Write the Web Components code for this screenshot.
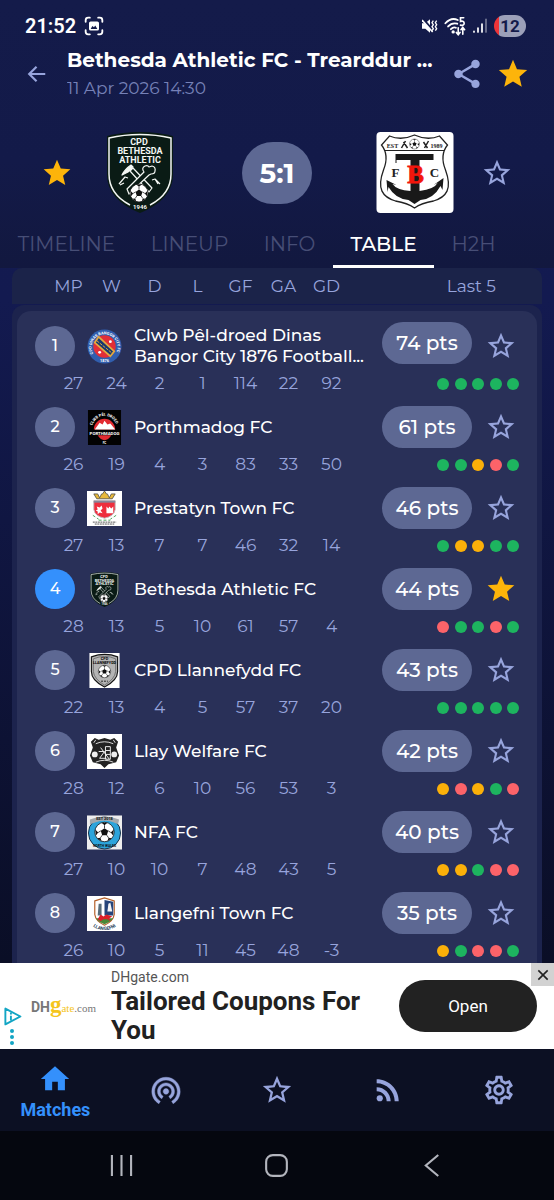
<!DOCTYPE html>
<html lang="en">
<head>
<meta charset="utf-8">
<meta name="viewport" content="width=device-width, initial-scale=1">
<title>Bethesda Athletic FC - Match</title>
<style>
  :root {
    --font-sans: Montserrat, Inter, "Open Sans", sans-serif;
    --font-ui: Roboto, "Noto Sans", sans-serif;
    --text: #fff;
    --muted: #97a4dc;
    --pill: #5d6893;
    --gold: #fdb40a;
    --blue: #3490fc;
    --win: #1db45f;
    --draw: #fbb009;
    --loss: #fc6369;
  }

  html, body {
    height: 100%;
  }

  body {
    margin: 0;
    background: #05070f;
    color: var(--text);
    font-family: var(--font-sans);
  }
</style>
</head>
<body>
<match-app></match-app>

<script>
const ICONS = {
  star: `<path d="M12 17.27 18.18 21l-1.64-7.03L22 9.24l-7.19-.61L12 2 9.19 8.63 2 9.24l5.46 4.73L5.82 21z"/>`,
  "star-outline": `<path d="M22 9.24l-7.19-.62L12 2 9.19 8.63 2 9.24l5.46 4.73L5.82 21 12 17.27 18.18 21l-1.63-7.03L22 9.24zM12 15.4l-3.76 2.27 1-4.28-3.32-2.88 4.38-.38L12 6.1l1.71 4.04 4.38.38-3.32 2.88 1 4.28L12 15.4z"/>`,
  back: `<path d="M21 12H4M11.5 4 3.5 12l8 8" fill="none" stroke="currentColor" stroke-width="2.4"/>`,
  share: `<path d="M18 16.08c-.76 0-1.44.3-1.96.77L8.91 12.7c.05-.23.09-.46.09-.7s-.04-.47-.09-.7l7.05-4.11c.54.5 1.25.81 2.04.81 1.66 0 3-1.34 3-3s-1.34-3-3-3-3 1.34-3 3c0 .24.04.47.09.7L8.04 9.81C7.5 9.31 6.79 9 6 9c-1.66 0-3 1.34-3 3s1.34 3 3 3c.79 0 1.5-.31 2.04-.81l7.12 4.16c-.05.21-.08.43-.08.65 0 1.61 1.31 2.92 2.92 2.92s2.92-1.31 2.92-2.92-1.31-2.92-2.92-2.92z"/>`,
  home: `<path d="M10 20v-6h4v6h5v-8h3L12 3 2 12h3v8z"/>`,
  live: `<path d="M12 11c-1.1 0-2 .9-2 2s.9 2 2 2 2-.9 2-2-.9-2-2-2zm6 2c0-3.31-2.69-6-6-6s-6 2.69-6 6c0 2.22 1.21 4.15 3 5.19l1-1.74c-1.19-.7-2-1.97-2-3.45 0-2.21 1.79-4 4-4s4 1.79 4 4c0 1.48-.81 2.75-2 3.45l1 1.74c1.79-1.04 3-2.97 3-5.19zM12 3C6.48 3 2 7.48 2 13c0 3.7 2.01 6.92 4.99 8.65l1-1.73C5.61 18.53 4 15.96 4 13c0-4.42 3.58-8 8-8s8 3.58 8 8c0 2.96-1.61 5.53-4 6.92l1 1.73c2.99-1.73 5-4.95 5-8.65 0-5.52-4.48-10-10-10z" stroke="currentColor" stroke-width=".3"/>`,
  feed: `<circle cx="6.18" cy="17.82" r="2.18"/><path d="M4 4.44v2.83c7.03 0 12.73 5.7 12.73 12.73h2.83c0-8.59-6.97-15.56-15.56-15.56zm0 5.66v2.83c3.9 0 7.07 3.17 7.07 7.07h2.83c0-5.47-4.43-9.9-9.9-9.9z"/>`,
  settings: `<path d="M19.43 12.98c.04-.32.07-.64.07-.98 0-.34-.03-.66-.07-.98l2.11-1.65c.19-.15.24-.42.12-.64l-2-3.46c-.09-.16-.26-.25-.44-.25-.06 0-.12.01-.17.03l-2.49 1c-.52-.4-1.08-.73-1.69-.98l-.38-2.65C14.46 2.18 14.25 2 14 2h-4c-.25 0-.46.18-.49.42l-.38 2.65c-.61.25-1.17.59-1.69.98l-2.49-1c-.06-.02-.12-.03-.18-.03-.17 0-.34.09-.43.25l-2 3.46c-.13.22-.07.49.12.64l2.11 1.65c-.04.32-.07.65-.07.98 0 .33.03.66.07.98l-2.11 1.65c-.19.15-.24.42-.12.64l2 3.46c.09.16.26.25.44.25.06 0 .12-.01.17-.03l2.49-1c.52.4 1.08.73 1.69.98l.38 2.65c.03.24.24.42.49.42h4c.25 0 .46-.18.49-.42l.38-2.65c.61-.25 1.17-.59 1.69-.98l2.49 1c.06.02.12.03.18.03.17 0 .34-.09.43-.25l2-3.46c.12-.22.07-.49-.12-.64l-2.11-1.65zm-1.98-1.71c.04.31.05.52.05.73 0 .21-.02.43-.05.73l-.14 1.13.89.7 1.08.84-.7 1.21-1.27-.51-1.04-.42-.9.68c-.43.32-.84.56-1.25.73l-1.06.43-.16 1.13-.2 1.35h-1.4l-.19-1.35-.16-1.13-1.06-.43c-.43-.18-.83-.41-1.23-.71l-.91-.7-1.06.43-1.27.51-.7-1.21 1.08-.84.89-.7-.14-1.13c-.03-.31-.05-.54-.05-.74s.02-.43.05-.73l.14-1.13-.89-.7-1.08-.84.7-1.21 1.27.51 1.04.42.9-.68c.43-.32.84-.56 1.25-.73l1.06-.43.16-1.13.2-1.35h1.39l.19 1.35.16 1.13 1.06.43c.43.18.83.41 1.23.71l.91.7 1.06-.43 1.27-.51.7 1.21-1.07.85-.89.7.14 1.13zM12 8c-2.21 0-4 1.79-4 4s1.79 4 4 4 4-1.79 4-4-1.79-4-4-4zm0 6c-1.1 0-2-.9-2-2s.9-2 2-2 2 .9 2 2-.9 2-2 2z"/>`,
  capture: `<g fill="none" stroke="currentColor" stroke-width="2.2" stroke-linecap="round"><path d="M2 7V5q0-3 3-3h2M17 2h2q3 0 3 3v2M22 17v2q0 3-3 3h-2M7 22H5q-3 0-3-3v-2"/></g><path fill-rule="evenodd" d="M8 6.5h8q2 0 2 2v7q0 2-2 2H8q-2 0-2-2v-7q0-2 2-2zM8 15.5h8l-2.5-4-1.5 2-2-1.5z"/>`,
  mute: `<path d="M0 8h5l7-6v20l-7-6H0z"/><path d="M1 1 17 20" stroke="#141b4a" stroke-width="4"/><path d="M0 3 16 21" fill="none" stroke="currentColor" stroke-width="2.4"/><path d="M17 4l-2 3 2 3-2 3 2 3-2 3M22 4l-2 3 2 3-2 3 2 3-2 3" fill="none" stroke="currentColor" stroke-width="2"/>`,
  wifi: `<g fill="none" stroke="currentColor" stroke-width="2" stroke-linecap="round"><path d="M1.5 9Q8 2 15 5.5M4.5 12.5q4-4.5 10-3M7.5 15.5q3-3 5.5-1.5"/><path d="M21.5 3H18v4q4-1 4 2t-4 2" stroke-width="1.8"/><path d="M15.5 14v7m-2-2 2 2.5 2-2.5M20.5 21v-7m-2 2 2-2.5 2 2.5" stroke-width="1.8"/></g><circle cx="10" cy="18.5" r="1.8"/>`,
  signal: `<g stroke="currentColor" stroke-width="2.6" stroke-linecap="round"><path d="M3 21v-1M9 21v-6M15 21V9"/><path d="M21 21V2" opacity=".4"/></g>`,
  close: `<path d="M5 5 19 19M19 5 5 19" fill="none" stroke="currentColor" stroke-width="2.4"/>`,
  adchoices: `<path d="M3 2v20l19-10z" fill="none" stroke="currentColor" stroke-width="2.4" stroke-linejoin="round"/><path d="M10 11v6M10 7v2.5" stroke="currentColor" stroke-width="2.4"/>`,
  dots: `<circle cx="12" cy="3" r="3"/><circle cx="12" cy="12" r="3"/><circle cx="12" cy="21" r="3"/>`,
  recents: `<path d="M2 1v22M12 1v22M22 1v22" stroke="currentColor" stroke-width="2.2"/>`,
  "system-home": `<rect x="1.2" y="1.2" width="21.6" height="21.6" rx="7" fill="none" stroke="currentColor" stroke-width="2.2"/>`,
  "system-back": `<path d="M18 1 5 12l13 11" fill="none" stroke="currentColor" stroke-width="2.2"/>`
};

const FOOTBALL = /* svg */`
  <circle r="10" fill="#fff" stroke="#111" stroke-width=".8"/>
  <path d="M0-4 3.8-1.2 2.4 3.3H-2.4L-3.8-1.2zM-3-9.5H3L0-7zM9.5-2.5 8.8 3.5 6.5.5zM-9.5-2.5-8.8 3.5-6.5.5zM3 9.5 7.5 6.5 4.2 6zM-3 9.5-7.5 6.5-4.2 6z" fill="#111"/>
  <path d="M0-4V-7M3.8-1.2 6.5 .5M2.4 3.3 4.2 6M-2.4 3.3-4.2 6M-3.8-1.2-6.5 .5" stroke="#111" stroke-width=".8"/>`;

const CRESTS = {
  bethesda: {
    box: "0 0 68 81",
    art: /* svg */`
      <path d="M1 4Q17 0 34 0T67 4V44Q66 68 34 81 2 68 1 44z" fill="#0a1b15"/>
      <path d="M24 73Q3 62 3 42V6Q18 2.5 34 2.5T65 6V42Q65 62 44 73" fill="none" stroke="#f4f7f4" stroke-width="1.5"/>
      <g fill="#f4f7f4" font-family="Roboto, sans-serif" font-weight="700" text-anchor="middle">
        <text x="33" y="13" font-size="9">CPD</text>
        <text x="34" y="22" font-size="9">BETHESDA</text>
        <text x="34" y="31" font-size="9">ATHLETIC</text>
        <text x="34" y="77" font-size="6">1946</text>
      </g>
      <g fill="none" stroke="#f4f7f4" stroke-width="1.2" stroke-linejoin="round">
        <path d="M16 43q3-6 9-10l2 2-5 5z" fill="#f4f7f4"/>
        <path d="M24 39 27 36 46 56 43 60z"/>
        <path d="M21 57 38 40q-3-4 1-6 3-1 4 1l3-1q4 1 3 5 0 3-4 3l-2 1-20 19z" fill="#0a1b15"/>
        <path d="M13 52l6-7 3 1M14 53l4-2M46 48l3-1 5 5M49 47l3 5"/>
      </g>
      <g transform="translate(33 61) scale(.9)">${FOOTBALL}</g>`
  },
  trearddur: {
    box: "0 0 77 81",
    art: /* svg */`
      <rect width="77" height="81" rx="4" fill="#fff"/>
      <path d="M13 4Q25 9 38 3 51 9 63 4L71 13Q63 23 69 38C76 57 70 65 57 69Q45 71 38 76 31 71 19 69C6 65 0 57 7 38Q13 23 5 13z" fill="none" stroke="#222" stroke-width="1.3"/>
      <path d="M8 18.5H68" stroke="#222" stroke-width="1"/>
      <g font-family="Liberation Serif, serif" font-weight="700" fill="#222" text-anchor="middle">
        <text x="16" y="16" font-size="6">EST</text>
        <text x="60" y="16" font-size="6">1989</text>
        <text x="19" y="45" font-size="13">F</text>
        <text x="58" y="45" font-size="13">C</text>
      </g>
      <g transform="translate(38 12) scale(.5)">${FOOTBALL}</g>
      <path d="M25 16l4-7M27 10l4 6M47 10l4 6M52 9l-4 7" stroke="#222" stroke-width="1.5"/>
      <path d="M19 22H57V28H43V59Q58 57 61 51L57 53 67 46 66 58 64 54Q57 67 44 68L38 72 32 68Q19 67 12 55L11 60 10 48 20 53 16 52Q20 58 34 59V28H20V31H19z" fill="#191919"/>
      <text x="39" y="51" text-anchor="middle" font-family="Liberation Serif, serif" font-weight="700" font-size="25" fill="#f3160c" stroke="#f3160c" stroke-width=".8">B</text>`
  },
  bangor: {
    box: "0 0 36 36",
    art: /* svg */`
      <circle cx="18" cy="18" r="17.5" fill="#315eae"/><circle cx="18" cy="18" r="11.5" fill="#e22e37"/>
      <path d="M8 14 24 28 28 23 12 8z" fill="#17396f" stroke="#e2a93f" stroke-width="1.8"/>
      <path d="M10 12 26 25" stroke="#e2a93f" stroke-dasharray="3 1"/><circle cx="24" cy="13" r="1.5" fill="#fff"/><circle cx="13" cy="24" r="1.5" fill="#fff"/>
      <path id="ring" d="M7.5 27a13.3 13.3 0 1 1 21 0" fill="none"/>
      <text font-family="Roboto, sans-serif" font-size="4" font-weight="700" fill="#fff"><textPath href="#ring" startOffset="2">CPD DINAS BANGOR CITY FC</textPath></text>
      <text x="18" y="34" text-anchor="middle" font-family="Roboto, sans-serif" font-size="4" font-weight="700" fill="#fff">1876</text>`
  },
  porthmadog: {
    box: "0 0 34 36",
    art: /* svg */`
      <rect width="34" height="36" fill="#020202"/>
      <path d="M6 20a11 11 0 0 1 22 0z" fill="#e32b31"/><path d="M7 20l5-7 3 2 2-4 3 4 3-1 5 6z" fill="#fff"/>
      <path d="M10 26h14q-3 5-7 5t-7-5" fill="#e32b31"/>
      <path id="ring" d="M4 20a13 14 0 0 1 26 0" fill="none"/>
      <g font-family="Roboto, sans-serif" font-weight="700" fill="#fff">
        <text font-size="4"><textPath href="#ring" startOffset="4">CLWB PÊL DROED</textPath></text>
        <text x="17" y="26" text-anchor="middle" font-size="4.5">PORTHMADOG</text>
        <text x="17" y="35" text-anchor="middle" font-size="3">FC</text>
      </g>`
  },
  prestatyn: {
    box: "0 0 36 36",
    art: /* svg */`
      <rect width="36" height="36" fill="#fff"/>
      <path d="M7 3h4l2 4 2-4h1l2-3 2 3h1l2 4 2-4h4l-3 5H10z" fill="#e8b93b" stroke="#4b4942" stroke-width=".8"/>
      <path d="M7 10H29V19Q28 26 18 28 8 26 7 19z" fill="#ee2d3d" stroke="#c3bec0"/><path d="M7 10h22v2H7z" fill="#85869a"/>
      <path d="M10 16l3 1 2-2 1 3-2 2 2 3-3-1-2 2v-3l-2-1 2-1zM20 23v-7l2 2 1-2 2 2 2-2v7z" fill="#fff"/>
      <path d="M6 25l6 4M30 25l-6 4M12 30h12" stroke="#4aa45a" stroke-dasharray="3 2"/><path d="M6 32h24M8 34h20" stroke="#555" stroke-dasharray="2 .6"/>`
  },
  llannefydd: {
    box: "0 0 31 36",
    art: /* svg */`
      <rect width="31" height="36" fill="#fff"/>
      <path d="M2 4Q16-1 29 4V19Q29 28 15.5 35 2 28 2 19z" fill="#b4b4b4" stroke="#151515" stroke-width="1.2"/>
      <path d="M4 6Q16 1 27 6V19Q26 27 15.5 33 5 27 4 19z" fill="none" stroke="#555" stroke-width=".7"/>
      <g font-family="Roboto, sans-serif" font-weight="700" text-anchor="middle"><text x="15.5" y="7" font-size="4">CPD</text><text x="15.5" y="11" font-size="3.8">LLANNEFYDD</text></g>
      <g transform="translate(15.5 19) scale(.64)">${FOOTBALL}</g><path d="M12 29h7" stroke="#222" stroke-dasharray="2 1"/>`
  },
  llay: {
    box: "0 0 36 36",
    art: /* svg */`
      <rect width="36" height="36" fill="#fff"/>
      <path d="M8 4 12 6 18 4 24 6 28 4 32 8 30 14Q31 17 33 22L30 29 22 31 18 35 14 31 6 29 3 22Q5 17 6 14L4 8z" fill="#222"/>
      <path d="M9 10q9-4 18 0M9 29q9-4 18 0M9 6 7 9M27 6l2 3" fill="none" stroke="#ddd"/><circle cx="8" cy="21" r="3" fill="#eee"/><circle cx="28" cy="21" r="3" fill="#eee"/>
      <path d="M12 18h6l-5 7h7M19 13h5v13h-5zM19 17h5M19 21h5M14 14l9 12" fill="none" stroke="#eee"/>`
  },
  nfa: {
    box: "0 0 36 35",
    art: /* svg */`
      <rect width="36" height="35" fill="#eee"/><circle cx="18" cy="18" r="16.5" fill="#2ca4db" stroke="#173047"/>
      <path d="M3 4q15-6 30 0l-1 5-5-2q-9-3-18 0l-6 2z" fill="#a3a8ac"/>
      <g transform="translate(18 17)">${FOOTBALL}</g>
      <g font-family="Roboto, sans-serif" font-weight="700" fill="#111" text-anchor="middle"><text x="18" y="5" font-size="4">EST 2018</text><text x="18" y="32" font-size="3.5">NORTH WALES</text></g>`
  },
  llangefni: {
    box: "0 0 36 36",
    art: /* svg */`
      <rect width="36" height="36" fill="#fff"/>
      <path d="M8 5 18 2l10 3v14q-1 7-10 11-9-4-10-11z" fill="#fff" stroke="#b45e27" stroke-width="1.2"/>
      <path d="M18 4l9 2v14h-9z" fill="#26447a"/><path d="M21 16l1-8 2-1 2 9z" fill="#f5f5f5"/><path d="M12 8h3v12h-4z" fill="#586c79"/>
      <path d="M9 23h18q-3 4-9 6-6-2-9-6" fill="#4a8736"/><path d="M11 24l3-5 3 2 3-2 6 2-3 2 1 3-3-2h-4l-3 2z" fill="#db2028"/>
      <path id="ring" d="M2 25q4 10 16 10t16-10" fill="none"/>
      <text font-family="Roboto, sans-serif" font-weight="700" font-size="4.8" fill="#273d5b" text-anchor="middle"><textPath href="#ring" startOffset="50%">LLANGEFNI</textPath></text>`
  }
};

const TEAMS = [
  { name: "Clwb Pêl-droed Dinas<br>Bangor City 1876 Football...", crest: "bangor", pts: 74, stats: [27, 24, 2, 1, 114, 22, 92], form: "WWWWW", tall: true },
  { name: "Porthmadog FC", crest: "porthmadog", pts: 61, stats: [26, 19, 4, 3, 83, 33, 50], form: "WWDLW" },
  { name: "Prestatyn Town FC", crest: "prestatyn", pts: 46, stats: [27, 13, 7, 7, 46, 32, 14], form: "WDDWW" },
  { name: "Bethesda Athletic FC", crest: "bethesda", pts: 44, stats: [28, 13, 5, 10, 61, 57, 4], form: "LWWLW", current: true },
  { name: "CPD Llannefydd FC", crest: "llannefydd", pts: 43, stats: [22, 13, 4, 5, 57, 37, 20], form: "WWWWW" },
  { name: "Llay Welfare FC", crest: "llay", pts: 42, stats: [28, 12, 6, 10, 56, 53, 3], form: "DLDWL" },
  { name: "NFA FC", crest: "nfa", pts: 40, stats: [27, 10, 10, 7, 48, 43, 5], form: "DDWLL" },
  { name: "Llangefni Town FC", crest: "llangefni", pts: 35, stats: [26, 10, 5, 11, 45, 48, -3], form: "DWLLW" }
];

const BUTTON_RESET = /* css */`
  button {
    margin: 0;
    padding: 0;
    border: 0;
    background: none;
    color: inherit;
    font: inherit;
    cursor: pointer;
  }
`;

class BaseElement extends HTMLElement {
  constructor() {
    super();
    this.attachShadow({ mode: "open" });
  }

  connectedCallback() {
    this.shadowRoot.innerHTML = `<style>${this.constructor.styles}</style>${this.template()}`;
  }
}

class UiIcon extends BaseElement {
  static get styles() {
    return /* css */`
      :host { display: inline-block; width: var(--icon-size, 32px); height: var(--icon-size, 32px); flex: none; }
      svg { display: block; width: 100%; height: 100%; fill: currentColor; }
    `;
  }

  template() {
    return `<svg viewBox="0 0 24 24" aria-hidden="true">${ICONS[this.getAttribute("name")]}</svg>`;
  }
}

class ClubCrest extends BaseElement {
  static get styles() {
    return /* css */`
      :host { display: block; height: var(--crest-size, 35px); }
      svg { display: block; width: 100%; height: 100%; }
    `;
  }

  template() {
    const { box, art } = CRESTS[this.getAttribute("club")];
    return `<svg viewBox="${box}" aria-hidden="true">${art}</svg>`;
  }
}

class FavoriteButton extends BaseElement {
  static get styles() {
    return /* css */`
      ${BUTTON_RESET}
      :host { display: flex; color: var(--muted); }
      :host([active]) { color: var(--gold); }
      button { display: flex; }
    `;
  }

  template() {
    const active = this.hasAttribute("active");
    return `<button type="button" aria-label="Favourite" aria-pressed="${active}">
      <ui-icon name="${active ? "star" : "star-outline"}"></ui-icon>
    </button>`;
  }
}

class StatusBar extends BaseElement {
  static get styles() {
    return /* css */`
      :host {
        display: flex;
        align-items: center;
        gap: 6px;
        height: 36px;
        padding: 8px 28px 0 25px;
        font-family: var(--font-ui);
        font-size: 20px;
        font-weight: 600;
        --icon-size: 20px;
      }
      time { margin-right: 2px; }
      .right { display: flex; align-items: center; gap: 6px; margin-left: auto; --icon-size: 16px; }
      .right ui-icon[name="wifi"] { --icon-size: 22px; }
      .battery {
        width: 32px;
        border-radius: 11px;
        background: linear-gradient(90deg, #ee3438 5px, #9ca0b9 5px);
        color: #141b4a;
        font-size: 17px;
        font-weight: 700;
        line-height: 22px;
        text-align: center;
      }
    `;
  }

  template() {
    return /* html */`
      <time>21:52</time>
      <ui-icon name="capture"></ui-icon>
      <div class="right">
        <ui-icon name="mute"></ui-icon>
        <ui-icon name="wifi"></ui-icon>
        <ui-icon name="signal"></ui-icon>
        <span class="battery">12</span>
      </div>`;
  }
}

class MatchHeader extends BaseElement {
  static get styles() {
    return /* css */`
      ${BUTTON_RESET}
      :host { display: flex; align-items: center; height: 60px; padding: 0 24px 0 26px; color: var(--muted); }
      button { display: flex; }
      .back { --icon-size: 22px; }
      .title { flex: 1; min-width: 0; padding-left: 19px; }
      h1 { margin: 0; color: var(--text); font-size: 20px; font-weight: 700; line-height: 28px; white-space: nowrap; }
      p { margin: 0; font-size: 17px; line-height: 28px; opacity: .75; }
      .actions { display: flex; gap: 12px; --icon-size: 34px; }
    `;
  }

  template() {
    return /* html */`
      <button class="back" type="button" aria-label="Back"><ui-icon name="back"></ui-icon></button>
      <div class="title">
        <h1><slot></slot></h1>
        <p><slot name="date"></slot></p>
      </div>
      <div class="actions">
        <button type="button" aria-label="Share"><ui-icon name="share"></ui-icon></button>
        <favorite-button active></favorite-button>
      </div>`;
  }
}

class MatchScore extends BaseElement {
  static get styles() {
    return /* css */`
      :host {
        display: grid;
        grid-template-columns: 82fr 83fr 192fr 83fr 82fr;
        align-items: center;
        justify-items: center;
        height: 81px;
        padding: 28px 16px 9px;
        --crest-size: 81px;
      }
      club-crest { width: 78px; }
      .score {
        width: 70px;
        border-radius: 31px;
        background: var(--pill);
        font-size: 28px;
        font-weight: 700;
        line-height: 62px;
        text-align: center;
      }
    `;
  }

  template() {
    return /* html */`
      <favorite-button active></favorite-button>
      <club-crest club="bethesda"></club-crest>
      <div class="score"><slot></slot></div>
      <club-crest club="trearddur"></club-crest>
      <favorite-button></favorite-button>`;
  }
}

class MatchTabs extends BaseElement {
  static get styles() {
    return /* css */`
      ${BUTTON_RESET}
      :host {
        display: grid;
        grid-template-columns: 133fr 113fr 87fr 101fr 79fr 41fr;
        height: 46px;
        color: #474e76;
        font-size: 20px;
      }
      button { border-bottom: 3px solid transparent; }
      button[aria-selected="true"] { border-color: #fff; color: #fff; font-weight: 500; }
    `;
  }

  template() {
    return ["TIMELINE", "LINEUP", "INFO", "TABLE", "H2H"]
      .map((tab) => `<button type="button" role="tab" aria-selected="${tab === "TABLE"}">${tab}</button>`)
      .join("");
  }
}

class FormDots extends BaseElement {
  static get styles() {
    return /* css */`
      :host { display: flex; justify-content: space-between; width: 82px; }
      i { width: 12px; height: 12px; border-radius: 50%; background: var(--win); }
      .D { background: var(--draw); }
      .L { background: var(--loss); }
    `;
  }

  template() {
    return [...this.getAttribute("results")].map((r) => `<i class="${r}"></i>`).join("");
  }
}

class LeagueTable extends BaseElement {
  static get styles() {
    return /* css */`
      :host { display: block; padding: 0 12px; }
      table, thead, tbody { display: block; }
      tr { display: flex; align-items: center; }
      th, td { padding: 0; font-weight: 400; }
      thead {
        margin-bottom: 1px;
        border-radius: 10px 10px 0 0;
        background: #1b2349;
      }
      thead tr { height: 36px; padding: 0 23px 0 35px; }
      .panel {
        padding: 6px 5px;
        border-radius: 12px 12px 0 0;
        background: #1c234d;
      }
      .head, .stats { color: var(--muted); font-size: 17px; line-height: 27px; }
      .head th, .stats td { width: 43px; text-align: center; white-space: nowrap; }
      .head .last, .stats .last { flex: 1; }
      .head .last { padding-right: 23px; text-align: right; }
      .stats .last { display: flex; justify-content: flex-end; }
      .card { padding-top: 11px; border-radius: 14px 14px 0 0; background: #293058; }
      .team { height: 48px; padding: 0 20px 0 18px; }
      .rank {
        width: 40px;
        border-radius: 50%;
        background: var(--pill);
        font-size: 16px;
        font-weight: 500;
        line-height: 40px;
        text-align: center;
      }
      .current .rank { background: var(--blue); }
      .crest { width: 35px; margin: 0 12px; }
      .name { flex: 1; font-size: 17px; font-weight: 500; line-height: 21px; text-align: left; white-space: nowrap; }
      .points {
        width: 90px;
        margin-right: 13px;
        border-radius: 21px;
        background: var(--pill);
        font-size: 20px;
        font-weight: 500;
        line-height: 42px;
        text-align: center;
      }
      .tall .points { align-self: flex-start; }
      .stats { padding: 0 18px 6px 35px; }
    `;
  }

  team(team, index) {
    return /* html */`
      <tbody class="${team.current ? "current" : ""} ${team.tall ? "tall" : ""}">
        <tr class="team">
          <td class="rank">${index + 1}</td>
          <td class="crest"><club-crest club="${team.crest}"></club-crest></td>
          <th class="name" scope="rowgroup">${team.name}</th>
          <td class="points">${team.pts} pts</td>
          <td><favorite-button ${team.current ? "active" : ""}></favorite-button></td>
        </tr>
        <tr class="stats">
          ${team.stats.map((value) => `<td>${value}</td>`).join("")}
          <td class="last"><form-dots results="${team.form}"></form-dots></td>
        </tr>
      </tbody>`;
  }

  template() {
    const heads = ["MP", "W", "D", "L", "GF", "GA", "GD"];
    return /* html */`
      <table>
        <thead>
          <tr class="head">${heads.map((h) => `<th scope="col">${h}</th>`).join("")}<th class="last" scope="col">Last 5</th></tr>
        </thead>
      </table>
      <div class="panel"><table class="card">${TEAMS.map(this.team).join("")}</table></div>`;
  }
}

class AdBanner extends BaseElement {
  static get styles() {
    return /* css */`
      ${BUTTON_RESET}
      :host {
        position: relative;
        display: flex;
        align-items: center;
        height: 86px;
        padding-right: 17px;
        box-sizing: border-box;
        background: #fff;
        color: #212121;
        font-family: var(--font-ui);
      }
      .choices { display: flex; flex-direction: column; align-items: center; align-self: flex-end; gap: 3px; width: 24px; padding-bottom: 4px; color: #12a5c4; }
      .choices ui-icon { --icon-size: 19px; }
      .choices ui-icon + ui-icon { --icon-size: 16px; }
      .logo { display: flex; align-items: baseline; width: 62px; margin: 0 18px 0 7px; color: #777; font: 11px/24px "Liberation Serif", serif; }
      .logo b { font: 700 14px/24px var(--font-ui); }
      .logo span { color: #f5c51c; }
      .logo .g { font-size: 23px; font-weight: 700; }
      .copy { flex: 1; }
      p { margin: 0; color: #555; font-size: 14px; line-height: 20px; }
      h2 { margin: 0; font-size: 26px; font-weight: 700; line-height: 29px; }
      .open { width: 138px; height: 52px; border-radius: 26px; background: #222; color: #fff; font-size: 17px; }
      .close { position: absolute; top: 0; right: 0; display: grid; place-items: center; width: 23px; height: 23px; background: #d2d2d2; --icon-size: 16px; }
    `;
  }

  template() {
    return /* html */`
      <div class="choices"><ui-icon name="adchoices"></ui-icon><ui-icon name="dots"></ui-icon></div>
      <div class="logo"><b>DH</b><span class="g">g</span><span>ate</span>.com</div>
      <div class="copy"><p>DHgate.com</p><h2>Tailored Coupons For You</h2></div>
      <button class="open" type="button">Open</button>
      <button class="close" type="button" aria-label="Close ad"><ui-icon name="close"></ui-icon></button>`;
  }
}

class NavItem extends BaseElement {
  static get styles() {
    return /* css */`
      ${BUTTON_RESET}
      :host { flex: 1; display: flex; color: var(--muted); --icon-size: 34px; }
      :host([active]) { color: var(--blue); }
      button { flex: 1; display: flex; flex-direction: column; align-items: center; justify-content: center; }
      :host([active]) button { padding-top: 6px; }
      span { font: 700 18px/28px var(--font-ui); }
    `;
  }

  template() {
    return `<button type="button" aria-label="${this.getAttribute("label")}">
      <ui-icon name="${this.getAttribute("icon")}"></ui-icon>
      ${this.hasAttribute("active") ? "<span><slot></slot></span>" : ""}
    </button>`;
  }
}

class SystemBar extends BaseElement {
  static get styles() {
    return /* css */`
      ${BUTTON_RESET}
      :host {
        display: grid;
        grid-template-columns: repeat(3, 28%);
        justify-content: center;
        height: 69px;
        background: #05070f;
        color: #b3b5bd;
        --icon-size: 23px;
      }
      button { display: grid; place-items: center; }
    `;
  }

  template() {
    return /* html */`
      <button type="button" aria-label="Recent apps"><ui-icon name="recents"></ui-icon></button>
      <button type="button" aria-label="Home"><ui-icon name="system-home"></ui-icon></button>
      <button type="button" aria-label="Back"><ui-icon name="system-back"></ui-icon></button>`;
  }
}

class MatchApp extends BaseElement {
  static get styles() {
    return /* css */`
      :host { display: flex; flex-direction: column; height: 100%; background: linear-gradient(#141c50, #131a50 25%, #0a0e26 80%); }
      header { background: linear-gradient(#141b4a, #131a49 60%, #12183f); }
      main { flex: 1; min-height: 0; overflow: hidden; }
      nav { display: flex; height: 82px; background: #0c1023; }
    `;
  }

  template() {
    return /* html */`
      <header>
        <status-bar></status-bar>
        <match-header>Bethesda Athletic FC - Trearddur ...<span slot="date">11 Apr 2026 14:30</span></match-header>
        <match-score>5:1</match-score>
        <match-tabs role="tablist"></match-tabs>
      </header>
      <main><league-table></league-table></main>
      <ad-banner></ad-banner>
      <nav>
        <nav-item icon="home" label="Matches" active>Matches</nav-item>
        <nav-item icon="live" label="Live"></nav-item>
        <nav-item icon="star-outline" label="Favourites"></nav-item>
        <nav-item icon="feed" label="News"></nav-item>
        <nav-item icon="settings" label="Settings"></nav-item>
      </nav>
      <system-bar></system-bar>`;
  }
}

customElements.define("ui-icon", UiIcon);
customElements.define("club-crest", ClubCrest);
customElements.define("favorite-button", FavoriteButton);
customElements.define("status-bar", StatusBar);
customElements.define("match-header", MatchHeader);
customElements.define("match-score", MatchScore);
customElements.define("match-tabs", MatchTabs);
customElements.define("form-dots", FormDots);
customElements.define("league-table", LeagueTable);
customElements.define("ad-banner", AdBanner);
customElements.define("nav-item", NavItem);
customElements.define("system-bar", SystemBar);
customElements.define("match-app", MatchApp);
</script>
</body>
</html>
